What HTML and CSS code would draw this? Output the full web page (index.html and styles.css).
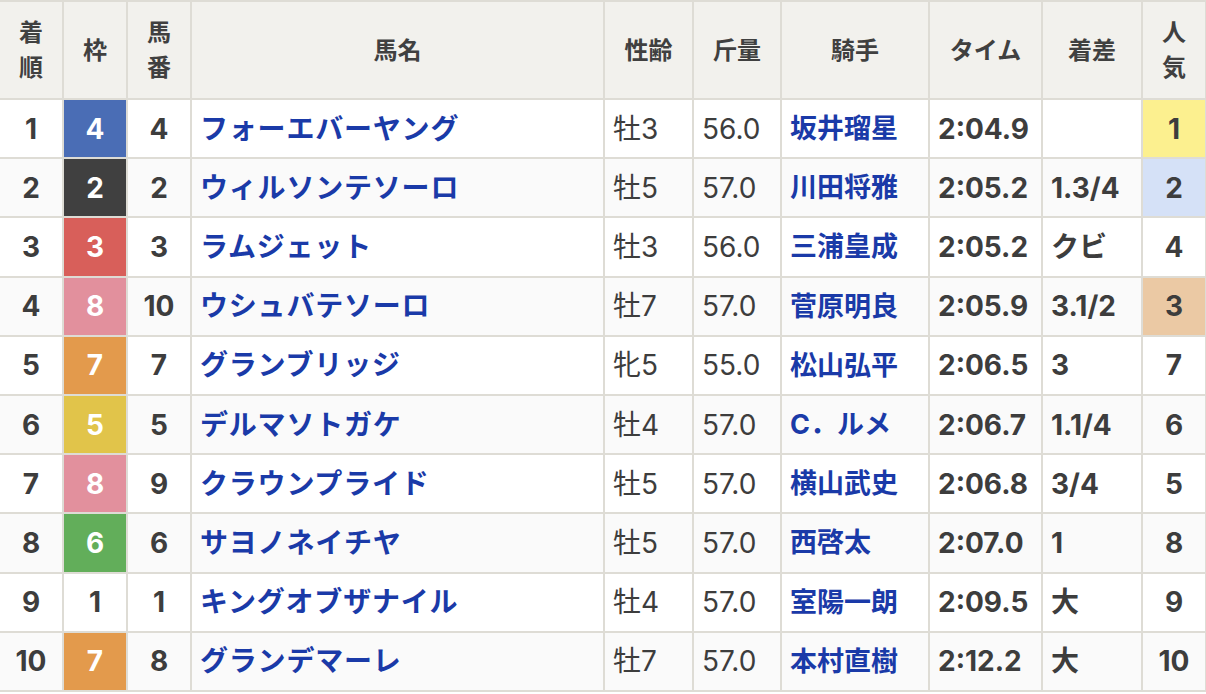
FILE: index.html
```html
<!DOCTYPE html>
<html lang="ja">
<head>
<meta charset="utf-8">
<title>レース結果</title>
<link rel="stylesheet" href="styles.css">
</head>
<body>
<div class="results">
  <div class="th">着<br>順</div>
  <div class="th">枠</div>
  <div class="th">馬<br>番</div>
  <div class="th">馬名</div>
  <div class="th">性齢</div>
  <div class="th">斤量</div>
  <div class="th">騎手</div>
  <div class="th">タイム</div>
  <div class="th">着差</div>
  <div class="th">人<br>気</div>

  <div class="td c b">1</div><div class="td c waku w4">4</div><div class="td c b">4</div><div class="td l horse">フォーエバーヤング</div><div class="td l reg">牡3</div><div class="td l reg">56.0</div><div class="td l jockey">坂井瑠星</div><div class="td l b">2:04.9</div><div class="td l b"></div><div class="td c b pop1">1</div>

  <div class="td c b alt">2</div><div class="td c waku w2">2</div><div class="td c b alt">2</div><div class="td l horse alt">ウィルソンテソーロ</div><div class="td l reg alt">牡5</div><div class="td l reg alt">57.0</div><div class="td l jockey alt">川田将雅</div><div class="td l b alt">2:05.2</div><div class="td l b alt">1.3/4</div><div class="td c b pop2">2</div>

  <div class="td c b">3</div><div class="td c waku w3">3</div><div class="td c b">3</div><div class="td l horse">ラムジェット</div><div class="td l reg">牡3</div><div class="td l reg">56.0</div><div class="td l jockey">三浦皇成</div><div class="td l b">2:05.2</div><div class="td l b">クビ</div><div class="td c b">4</div>

  <div class="td c b alt">4</div><div class="td c waku w8">8</div><div class="td c b alt">10</div><div class="td l horse alt">ウシュバテソーロ</div><div class="td l reg alt">牡7</div><div class="td l reg alt">57.0</div><div class="td l jockey alt">菅原明良</div><div class="td l b alt">2:05.9</div><div class="td l b alt">3.1/2</div><div class="td c b pop3">3</div>

  <div class="td c b">5</div><div class="td c waku w7">7</div><div class="td c b">7</div><div class="td l horse">グランブリッジ</div><div class="td l reg">牝5</div><div class="td l reg">55.0</div><div class="td l jockey">松山弘平</div><div class="td l b">2:06.5</div><div class="td l b">3</div><div class="td c b">7</div>

  <div class="td c b alt">6</div><div class="td c waku w5">5</div><div class="td c b alt">5</div><div class="td l horse alt">デルマソトガケ</div><div class="td l reg alt">牡4</div><div class="td l reg alt">57.0</div><div class="td l jockey alt">C．ルメ</div><div class="td l b alt">2:06.7</div><div class="td l b alt">1.1/4</div><div class="td c b alt">6</div>

  <div class="td c b">7</div><div class="td c waku w8">8</div><div class="td c b">9</div><div class="td l horse">クラウンプライド</div><div class="td l reg">牡5</div><div class="td l reg">57.0</div><div class="td l jockey">横山武史</div><div class="td l b">2:06.8</div><div class="td l b">3/4</div><div class="td c b">5</div>

  <div class="td c b alt">8</div><div class="td c waku w6">6</div><div class="td c b alt">6</div><div class="td l horse alt">サヨノネイチヤ</div><div class="td l reg alt">牡5</div><div class="td l reg alt">57.0</div><div class="td l jockey alt">西啓太</div><div class="td l b alt">2:07.0</div><div class="td l b alt">1</div><div class="td c b alt">8</div>

  <div class="td c b">9</div><div class="td c waku w1">1</div><div class="td c b">1</div><div class="td l horse">キングオブザナイル</div><div class="td l reg">牡4</div><div class="td l reg">57.0</div><div class="td l jockey">室陽一朗</div><div class="td l b">2:09.5</div><div class="td l b">大</div><div class="td c b">9</div>

  <div class="td c b alt">10</div><div class="td c waku w7">7</div><div class="td c b alt">8</div><div class="td l horse alt">グランデマーレ</div><div class="td l reg alt">牡7</div><div class="td l reg alt">57.0</div><div class="td l jockey alt">本村直樹</div><div class="td l b alt">2:12.2</div><div class="td l b alt">大</div><div class="td c b alt">10</div>
</div>
</body>
</html>
```

FILE: styles.css
```css
html, body {
  margin: 0;
  padding: 0;
  background: #ffffff;
}

body {
  font-family: Inter, "Noto Sans CJK JP", sans-serif;
  color: #3d3d3d;
  overflow: hidden;
}

.results {
  display: grid;
  grid-template-columns: 62px 62px 62px 411px 87px 86px 146px 111px 98px 62px;
  grid-template-rows: 96px repeat(10, 57.2px);
  gap: 2px;
  padding: 2px;
  margin-left: -2px;
  width: max-content;
  background: #dedcd5;
}

.th {
  background: #f2f1ed;
  color: #404040;
  font-size: 24px;
  font-weight: 700;
  line-height: 35px;
  display: flex;
  align-items: center;
  justify-content: center;
  text-align: center;
}

.td {
  background: #ffffff;
  font-size: 28px;
  line-height: 1;
  display: flex;
  align-items: center;
  white-space: nowrap;
}

.td.alt {
  background: #fafafa;
}

.c {
  justify-content: center;
}

.l {
  justify-content: flex-start;
  padding-left: 8px;
}

.b {
  font-weight: 700;
}

.reg {
  font-weight: 400;
}

.horse,
.jockey {
  font-weight: 700;
  color: #1a3aa8;
}

.horse {
  letter-spacing: 0.8px;
}

.jockey {
  font-size: 27px;
}

.waku {
  font-weight: 700;
  color: #ffffff;
}

.w1 { background: #ffffff; color: #3d3d3d; }
.w2 { background: #404040; }
.w3 { background: #d85f5a; }
.w4 { background: #4a6db5; }
.w5 { background: #e1c44a; }
.w6 { background: #62ae5a; }
.w7 { background: #e39a4c; }
.w8 { background: #e2909d; }

.td.pop1 { background: #fcf08f; }
.td.pop2 { background: #d5e1f7; }
.td.pop3 { background: #ebc9a4; }
```
